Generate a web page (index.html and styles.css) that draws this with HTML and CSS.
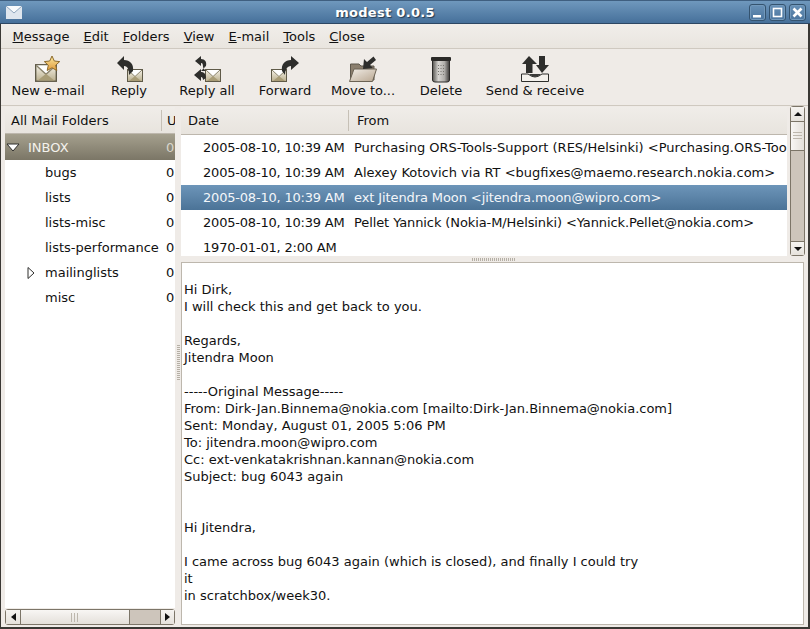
FILE: index.html
```html
<!DOCTYPE html>
<html lang="en">
<head>
<meta charset="UTF-8">
<title>modest 0.0.5</title>
<link rel="stylesheet" href="styles.css">
</head>
<body>
<svg class="defs" width="0" height="0">
    <defs>
        <linearGradient id="envFill" x1="0" y1="0" x2="0" y2="1">
            <stop offset="0" stop-color="#f6f3ea"/>
            <stop offset="1" stop-color="#b9ae8c"/>
        </linearGradient>
        <linearGradient id="starFill" x1="0" y1="0" x2="0" y2="1">
            <stop offset="0" stop-color="#fbe9a0"/>
            <stop offset="1" stop-color="#e09a3a"/>
        </linearGradient>
        <linearGradient id="folderFill" x1="0" y1="0" x2="1" y2="1">
            <stop offset="0" stop-color="#f2eee8"/>
            <stop offset="1" stop-color="#b8a690"/>
        </linearGradient>
        <linearGradient id="binFill" x1="0" y1="0" x2="1" y2="0">
            <stop offset="0" stop-color="#55534f"/>
            <stop offset="0.35" stop-color="#d8d6d2"/>
            <stop offset="0.7" stop-color="#b0aeaa"/>
            <stop offset="1" stop-color="#3c3a38"/>
        </linearGradient>
        <symbol id="envelope" viewBox="0 0 16 13">
            <rect x="0.5" y="0.5" width="15" height="12" fill="url(#envFill)" stroke="#5f5a48"/>
            <path d="M1 1 L8 7.5 L15 1" fill="#fff" stroke="#8a836c"/>
            <path d="M2 12 L8 7 L14 12 Z" fill="#a89c76"/>
        </symbol>
    </defs>
</svg>
<div class="window">
    <div class="titlebar">
        <svg class="title-icon" width="16" height="13" viewBox="0 0 16 13">
            <rect width="16" height="13" fill="#dfe6ee"/>
            <path d="M0 0 L8 7 L16 0" fill="#f8fafc" stroke="#8fa6bd"/>
        </svg>
        <span class="title-text">modest 0.0.5</span>
        <div class="win-buttons">
            <div class="win-btn"><svg width="11" height="11" viewBox="0 0 11 11"><rect x="1" y="8" width="8" height="2.5" fill="#fff"/></svg></div>
            <div class="win-btn"><svg width="11" height="11" viewBox="0 0 11 11"><rect x="1.5" y="1.5" width="8" height="8" fill="none" stroke="#fff" stroke-width="1.6"/></svg></div>
            <div class="win-btn"><svg width="11" height="11" viewBox="0 0 11 11"><path d="M1.5 1.5 L9.5 9.5 M9.5 1.5 L1.5 9.5" stroke="#fff" stroke-width="2.6"/></svg></div>
        </div>
    </div>

    <div class="menubar">
        <span class="menu-item"><u>M</u>essage</span>
        <span class="menu-item"><u>E</u>dit</span>
        <span class="menu-item"><u>F</u>olders</span>
        <span class="menu-item"><u>V</u>iew</span>
        <span class="menu-item"><u>E</u>-mail</span>
        <span class="menu-item"><u>T</u>ools</span>
        <span class="menu-item"><u>C</u>lose</span>
    </div>

    <div class="toolbar">
        <div class="tool tool-first">
            <svg width="30" height="28" viewBox="0 -1 30 28">
                <use href="#envelope" x="2" y="8" width="22" height="18"/>
                <path d="M19 0 L21.3 5 L26.7 5.6 L22.7 9.2 L23.8 14.5 L19 11.8 L14.2 14.5 L15.3 9.2 L11.3 5.6 L16.7 5 Z" fill="url(#starFill)" stroke="#8c6a2c"/>
            </svg>
            <span>New e-mail</span>
        </div>
        <div class="tool">
            <svg width="30" height="28" viewBox="0 -1 30 28">
                <use href="#envelope" x="13" y="13" width="16" height="13"/>
                <path d="M3 7 L10 0 L10 4 C16 4 20 8 19 15 L15 19 C15 14 14 10 10 10 L10 14 Z" fill="#2e2e2c"/>
            </svg>
            <span>Reply</span>
        </div>
        <div class="tool">
            <svg width="30" height="28" viewBox="0 -1 30 28">
                <use href="#envelope" x="13" y="13" width="16" height="13"/>
                <path d="M3 5 L9 0 L9 3 C13 3 15 6 14 10 L11 12 C11 9 11 7 9 7 L9 10 Z" fill="#2e2e2c"/>
                <path d="M2 19 L9 13 L9 16 C12 16 14 18 14 22 L11 24 C11 22 10 21 9 21 L9 25 Z" fill="#2e2e2c"/>
                <path d="M14 10 L11 12 L14 15 L9 15 L11 13 Z" fill="#2e2e2c"/>
            </svg>
            <span>Reply all</span>
        </div>
        <div class="tool">
            <svg width="30" height="28" viewBox="0 -1 30 28">
                <use href="#envelope" x="1" y="13" width="16" height="13"/>
                <path d="M29 7 L21 0 L21 4 C15 4 11 8 12 15 L15 19 C15 14 17 10 21 10 L21 14 Z" fill="#2e2e2c"/>
            </svg>
            <span>Forward</span>
        </div>
        <div class="tool">
            <svg width="30" height="28" viewBox="0 -1 30 28">
                <path d="M2.5 8 L11 8 L13 10 L26 10 L26 24 L2.5 24 Z" fill="#8b7f6e" stroke="#5d564b"/>
                <path d="M6 13 L28.5 13 L24.5 25.5 L1.5 25.5 Z" fill="url(#folderFill)" stroke="#6b6254"/>
                <path d="M25.5 0.5 L28 4 L22 9 L25 12 L15 13 L16 3 L19 6 Z" fill="#2e2e2c"/>
            </svg>
            <span>Move to...</span>
        </div>
        <div class="tool">
            <svg width="30" height="28" viewBox="0 -1 30 28">
                <rect x="5" y="1" width="20" height="4" rx="1" fill="#2b2a28"/>
                <path d="M6.5 4.5 L23.5 4.5 L23.5 24 Q23.5 26 21 26 L9 26 Q6.5 26 6.5 24 Z" fill="url(#binFill)" stroke="#2b2a28"/>
                <path d="M12.5 9 V20 M15 9 V20 M17.5 9 V20" stroke="#77756f" stroke-width="1" stroke-dasharray="1 2"/>
            </svg>
            <span>Delete</span>
        </div>
        <div class="tool tool-last">
            <svg width="30" height="28" viewBox="0 -1 30 28">
                <path d="M9 0 L17 8 L12.5 8 L12.5 17 L6 17 L6 8 L2 8 Z" fill="#2e2e2c"/>
                <path d="M19 0 L25 0 L25 9 L29 9 L22 17 L16 9 L19 9 Z" fill="#2e2e2c"/>
                <path d="M1.5 18 L8 18 Q15 24 22 18 L28.5 18 L28.5 25.5 L1.5 25.5 Z" fill="#f4f1ec" stroke="#2e2e2c"/>
                <path d="M9 18 L21 18 Q15 24 9 18 Z" fill="#3a3937"/>
            </svg>
            <span>Send &amp; receive</span>
        </div>
    </div>

    <div class="panes">
        <div class="folders">
            <div class="col-header folder-header">
                <div class="col col-folder">All Mail Folders</div>
                <div class="col col-unread">U</div>
            </div>
            <div class="folder-list">
                <div class="folder-row folder-selected">
                    <span class="expander"><svg width="14" height="9" viewBox="0 0 14 9"><path d="M1 1 L13 1 L7 8 Z" fill="#fff" stroke="#2e2e2c"/></svg></span>
                    <span class="folder-name">INBOX</span><span class="count">0</span>
                </div>
                <div class="folder-row child"><span class="folder-name">bugs</span><span class="count">0</span></div>
                <div class="folder-row child"><span class="folder-name">lists</span><span class="count">0</span></div>
                <div class="folder-row child"><span class="folder-name">lists-misc</span><span class="count">0</span></div>
                <div class="folder-row child"><span class="folder-name">lists-performance</span><span class="count">0</span></div>
                <div class="folder-row child has-arrow">
                    <span class="child-arrow"><svg width="8" height="12" viewBox="0 0 8 12"><path d="M1 0.5 L7 6 L1 11.5 Z" fill="#fff" stroke="#2e2e2c"/></svg></span>
                    <span class="folder-name">mailinglists</span><span class="count">0</span>
                </div>
                <div class="folder-row child"><span class="folder-name">misc</span><span class="count">0</span></div>
            </div>
            <div class="hscroll">
                <div class="sb-btn sb-btn-h"><span class="tri tri-left"></span></div>
                <div class="hthumb"><span class="grip-v"></span></div>
                <div class="htrough"></div>
                <div class="sb-btn sb-btn-h"><span class="tri tri-right"></span></div>
            </div>
        </div>

        <div class="vgrip"><span class="vgrip-dots"></span></div>

        <div class="right">
            <div class="headers-pane">
                <div class="headers-main">
                    <div class="col-header">
                        <div class="col col-date">Date</div>
                        <div class="col col-from">From</div>
                    </div>
                    <div class="header-row"><span class="h-date">2005-08-10, 10:39 AM</span><span class="h-from">Purchasing ORS-Tools-Support (RES/Helsinki) &lt;Purchasing.ORS-Tools-Support@nokia.com&gt;</span></div>
                    <div class="header-row"><span class="h-date">2005-08-10, 10:39 AM</span><span class="h-from">Alexey Kotovich via RT &lt;bugfixes@maemo.research.nokia.com&gt;</span></div>
                    <div class="header-row row-selected"><span class="h-date">2005-08-10, 10:39 AM</span><span class="h-from h-tight">ext Jitendra Moon &lt;jitendra.moon@wipro.com&gt;</span></div>
                    <div class="header-row"><span class="h-date">2005-08-10, 10:39 AM</span><span class="h-from h-tight">Pellet Yannick (Nokia-M/Helsinki) &lt;Yannick.Pellet@nokia.com&gt;</span></div>
                    <div class="header-row"><span class="h-date">1970-01-01, 2:00 AM</span><span class="h-from"></span></div>
                </div>
                <div class="vscroll">
                    <div class="sb-btn sb-btn-v"><span class="tri tri-up"></span></div>
                    <div class="vthumb"><span class="grip-h"></span></div>
                    <div class="vtrough"></div>
                    <div class="sb-btn sb-btn-v"><span class="tri tri-down"></span></div>
                </div>
            </div>
            <div class="hgrip"><span class="hgrip-dots"></span></div>
            <div class="viewer"><pre class="message">

Hi Dirk,
I will check this and get back to you.

Regards,
Jitendra Moon

-----Original Message-----
From: Dirk-Jan.Binnema@nokia.com [mailto:Dirk-Jan.Binnema@nokia.com]
Sent: Monday, August 01, 2005 5:06 PM
To: jitendra.moon@wipro.com
Cc: ext-venkatakrishnan.kannan@nokia.com
Subject: bug 6043 again


Hi Jitendra,

I came across bug 6043 again (which is closed), and finally I could try
it
in scratchbox/week30.</pre></div>
        </div>
    </div>
</div>
</body>
</html>
```

FILE: styles.css
```css
* {
    box-sizing: border-box;
}
html, body {
    margin: 0;
    height: 100%;
    overflow: hidden;
}
body {
    font-family: "DejaVu Sans", sans-serif;
    font-size: 13px;
    color: #111;
    background: #2f2d2a;
}
.defs {
    display: block;
    height: 0;
}
.window {
    width: 810px;
    height: 629px;
    display: flex;
    flex-direction: column;
    background: #efebe7;
    border-left: 1px solid #3a3834;
    border-right: 2px solid #3a3834;
    border-bottom: 2px solid #3a3834;
}

/* title bar */
.titlebar {
    height: 24px;
    margin-left: -1px;
    margin-right: -2px;
    flex: none;
    position: relative;
    display: flex;
    align-items: center;
    justify-content: space-between;
    padding: 0 4px 0 6px;
    background: linear-gradient(#6f98bd, #46709a);
    border-top: 1px solid #3f5f80;
    border-bottom: 1px solid #2d4763;
}
.title-text {
    position: absolute;
    left: 0;
    right: 40px;
    text-align: center;
    color: #fff;
    font-weight: bold;
    letter-spacing: 0.3px;
    text-shadow: 1px 1px 1px #25394f;
}
.win-buttons {
    display: flex;
    gap: 3px;
}
.win-btn {
    width: 17px;
    height: 17px;
    display: flex;
    align-items: center;
    justify-content: center;
    border: 1px solid #34536f;
    border-radius: 3px;
    box-shadow: inset 0 0 0 1px #7299bc;
}

/* menu bar */
.menubar {
    height: 25px;
    flex: none;
    display: flex;
    align-items: center;
    padding: 0 4.5px;
    background: linear-gradient(#f1eeea, #e9e5df);
    border-bottom: 1px solid #cfc9c0;
}
.menu-item {
    padding: 0 7px;
    white-space: nowrap;
}

/* toolbar */
.toolbar {
    height: 57px;
    flex: none;
    display: flex;
    padding: 6px 0 0 5px;
    border-bottom: 1px solid #cfc9c0;
}
.tool {
    width: 78px;
    display: flex;
    flex-direction: column;
    align-items: center;
    white-space: nowrap;
}
.tool-first {
    width: 84px;
}
.tool-last {
    width: 110px;
}
.tool span {
    line-height: 16px;
}

/* panes */
.panes {
    flex: 1;
    min-height: 0;
    display: flex;
    padding: 1px 3px 2px 4px;
}
.folders {
    width: 170px;
    flex: none;
    display: flex;
    flex-direction: column;
}
.vgrip {
    width: 6px;
    flex: none;
    display: flex;
    align-items: center;
    justify-content: center;
}
.vgrip-dots {
    width: 3px;
    height: 36px;
    margin-bottom: 6px;
    background: repeating-linear-gradient(#b5afa5 0 1px, transparent 1px 2px);
}
.right {
    flex: 1;
    min-width: 0;
    display: flex;
    flex-direction: column;
}

/* column headers */
.col-header {
    height: 28px;
    flex: none;
    display: flex;
    align-items: center;
    background: linear-gradient(#f0ede9, #e8e4de);
    border-bottom: 1px solid #bdb7ad;
    overflow: hidden;
}
.folder-header {
    height: 27px;
}
.col {
    height: 21px;
    line-height: 21px;
    white-space: nowrap;
    overflow: hidden;
}
.col-folder {
    width: 157px;
    flex: none;
    padding-left: 6px;
    border-right: 1px solid #c6c0b6;
}
.col-unread {
    padding-left: 5px;
}
.col-date {
    width: 168px;
    flex: none;
    padding-left: 7px;
    border-right: 1px solid #c6c0b6;
}
.col-from {
    padding-left: 8px;
}

/* folder tree */
.folder-list {
    flex: 1;
    background: #fff;
    margin-bottom: 1px;
}
.folder-row {
    height: 25px;
    display: flex;
    align-items: center;
    white-space: nowrap;
}
.folder-selected {
    height: 26px;
    color: #f4f2ec;
    background: linear-gradient(#a5a08e, #7b7666);
}
.expander {
    width: 23px;
    padding-left: 1px;
    display: flex;
}
.child {
    padding-left: 40px;
}
.has-arrow {
    padding-left: 22px;
}
.child-arrow {
    width: 18px;
    display: flex;
}
.folder-name {
    flex: 1;
}
.count {
    width: 8px;
    margin-right: 1px;
}
.folder-selected .count {
    color: #d9d6cc;
}

/* scrollbars */
.hscroll {
    height: 16px;
    flex: none;
    display: flex;
    background: #cdc5bb;
    border: 1px solid #7c7568;
    border-radius: 3px;
}
.vscroll {
    width: 15px;
    height: 150px;
    margin-top: -1px;
    margin-left: 3px;
    flex: none;
    display: flex;
    flex-direction: column;
    background: #cdc5bb;
    border: 1px solid #7c7568;
    border-radius: 3px;
}
.sb-btn {
    flex: none;
    display: flex;
    align-items: center;
    justify-content: center;
    background: linear-gradient(#f6f4f1, #e6e2dc);
}
.sb-btn-h {
    width: 14px;
}
.sb-btn-v {
    height: 14px;
}
.hthumb {
    width: 110px;
    flex: none;
    display: flex;
    align-items: center;
    justify-content: center;
    background: linear-gradient(#f8f6f4, #e4e0da);
    border-left: 1px solid #7c7568;
    border-right: 1px solid #7c7568;
}
.htrough, .vtrough {
    flex: 1;
}
.hscroll .sb-btn:last-child {
    border-left: 1px solid #7c7568;
}
.vthumb {
    height: 30px;
    flex: none;
    display: flex;
    align-items: center;
    justify-content: center;
    background: linear-gradient(90deg, #f8f6f4, #e4e0da);
    border-top: 1px solid #7c7568;
    border-bottom: 1px solid #7c7568;
}
.vscroll .sb-btn:last-child {
    border-top: 1px solid #7c7568;
}
.grip-v {
    width: 8px;
    height: 9px;
    background: repeating-linear-gradient(90deg, #bdb7ad 0 1px, transparent 1px 3px);
}
.grip-h {
    width: 9px;
    height: 8px;
    background: repeating-linear-gradient(#bdb7ad 0 1px, transparent 1px 3px);
}
.tri {
    width: 0;
    height: 0;
    border-style: solid;
    border-color: transparent;
}
.tri-left {
    border-width: 4px 5px 4px 0;
    border-right-color: #111;
}
.tri-right {
    border-width: 4px 0 4px 5px;
    border-left-color: #111;
}
.tri-up {
    border-width: 0 4px 4px 4px;
    border-bottom-color: #111;
}
.tri-down {
    border-width: 4px 4px 0 4px;
    border-top-color: #111;
}

/* message list */
.headers-pane {
    height: 149px;
    flex: none;
    display: flex;
}
.headers-main {
    flex: 1;
    min-width: 0;
    background: #fff;
    overflow: hidden;
}
.header-row {
    height: 25px;
    display: flex;
    align-items: center;
    white-space: nowrap;
    overflow: hidden;
}
.row-selected {
    color: #f3f6fa;
    background: linear-gradient(#6d95b9, #4b7397);
}
.h-date {
    width: 173px;
    flex: none;
    padding-left: 22px;
    letter-spacing: -0.2px;
}
.h-from {
    flex: none;
}
.h-tight {
    letter-spacing: -0.1px;
}
.hgrip {
    height: 6px;
    flex: none;
    display: flex;
    align-items: center;
    justify-content: center;
}
.hgrip-dots {
    width: 43px;
    height: 3px;
    background: repeating-linear-gradient(90deg, #b5afa5 0 1px, transparent 1px 2px);
}

/* message body */
.viewer {
    flex: 1;
    min-height: 0;
    margin-right: 1px;
    background: #fff;
    border: 1px solid #bdb7ad;
    overflow: hidden;
}
.message {
    margin: 0;
    padding: 1px 2px 0;
    font-family: inherit;
    font-size: 13px;
    line-height: 17px;
}
```
